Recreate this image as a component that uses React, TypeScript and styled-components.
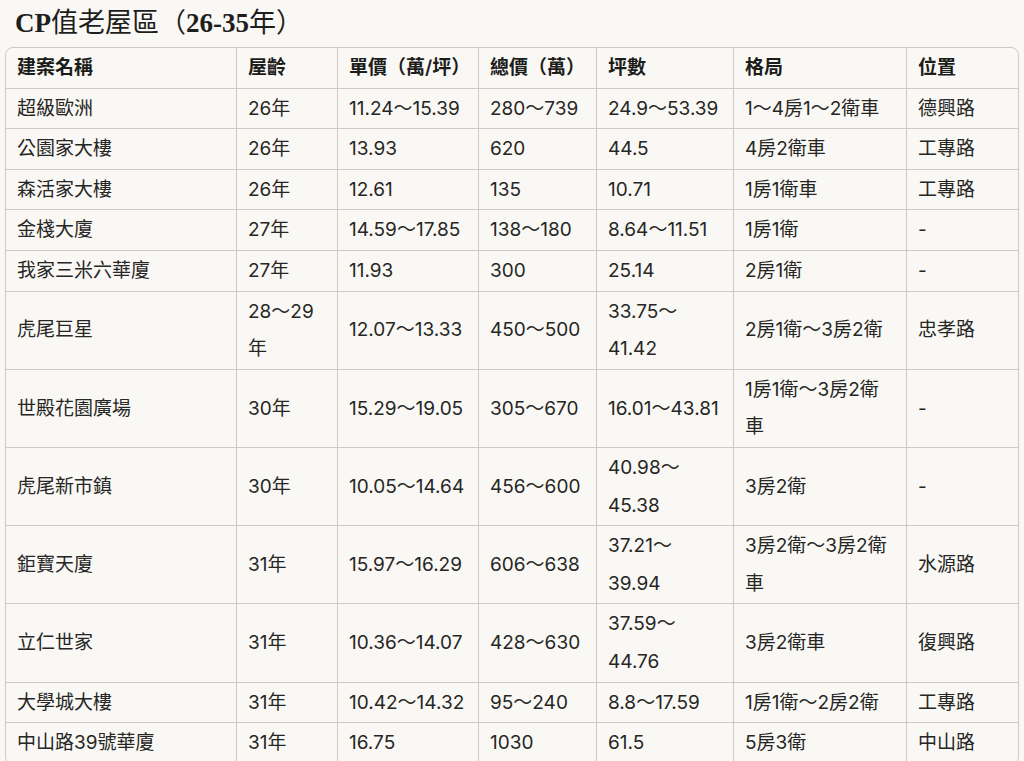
import styled, { createGlobalStyle } from "styled-components"

const GlobalStyle = createGlobalStyle`
  html, body {
    margin: 0;
    padding: 0;
    background: #f9f8f5;
  }
  body {
    font-family: Inter, "Noto Sans CJK TC", sans-serif;
    color: #262624;
  }
`

const Page = styled.div`
  padding: 0 5px;
`

const Title = styled.h2`
  margin: 0;
  padding: 0 0 0 10px;
  height: 47px;
  line-height: 47px;
  font-family: "Liberation Serif", "Noto Sans CJK TC", serif;
  font-size: 27px;
  font-weight: 700;
  color: #1e1e1c;
`

const Light = styled.span`
  font-weight: 400;
`

const Frame = styled.div`
  border: 1px solid #cdcac4;
  border-radius: 8px;
  overflow: hidden;
`

const Table = styled.table`
  width: 100%;
  table-layout: fixed;
  border-collapse: separate;
  border-spacing: 0;
  font-size: 19px;
`

const Cell = styled.td`
  padding: 1px 11px;
  line-height: 37.6px;
  text-align: left;
  vertical-align: middle;
  border-right: 1px solid #cdcac4;
  border-bottom: 1px solid #cdcac4;
  &:last-child {
    border-right: none;
  }
`

const Head = styled(Cell).attrs({ as: "th" })`
  font-weight: 600;
  color: #1c1c1a;
`

const widths = [231, 101, 141, 118, 137, 173, 112]
const headers = ["建案名稱", "屋齡", "單價（萬/坪）", "總價（萬）", "坪數", "格局", "位置"]

const rows: string[][] = [
  ["超級歐洲", "26年", "11.24～15.39", "280～739", "24.9～53.39", "1～4房1～2衛車", "德興路"],
  ["公園家大樓", "26年", "13.93", "620", "44.5", "4房2衛車", "工專路"],
  ["森活家大樓", "26年", "12.61", "135", "10.71", "1房1衛車", "工專路"],
  ["金棧大廈", "27年", "14.59～17.85", "138～180", "8.64～11.51", "1房1衛", "-"],
  ["我家三米六華廈", "27年", "11.93", "300", "25.14", "2房1衛", "-"],
  ["虎尾巨星", "28～29年", "12.07～13.33", "450～500", "33.75～41.42", "2房1衛～3房2衛", "忠孝路"],
  ["世殿花園廣場", "30年", "15.29～19.05", "305～670", "16.01～43.81", "1房1衛～3房2衛車", "-"],
  ["虎尾新市鎮", "30年", "10.05～14.64", "456～600", "40.98～45.38", "3房2衛", "-"],
  ["鉅寶天廈", "31年", "15.97～16.29", "606～638", "37.21～39.94", "3房2衛～3房2衛車", "水源路"],
  ["立仁世家", "31年", "10.36～14.07", "428～630", "37.59～44.76", "3房2衛車", "復興路"],
  ["大學城大樓", "31年", "10.42～14.32", "95～240", "8.8～17.59", "1房1衛～2房2衛", "工專路"],
  ["中山路39號華廈", "31年", "16.75", "1030", "61.5", "5房3衛", "中山路"],
]

function App() {
  return (
    <Page>
      <GlobalStyle />
      <Title>
        CP<Light>值老屋區（</Light>26-35<Light>年）</Light>
      </Title>
      <Frame>
        <Table>
          <colgroup>
            {widths.map((w, i) => (
              <col key={i} style={{ width: w }} />
            ))}
          </colgroup>
          <thead>
            <tr>
              {headers.map((h) => (
                <Head key={h}>{h}</Head>
              ))}
            </tr>
          </thead>
          <tbody>
            {rows.map((r) => (
              <tr key={r[0]}>
                {r.map((c, i) => (
                  <Cell key={i}>{c}</Cell>
                ))}
              </tr>
            ))}
          </tbody>
        </Table>
      </Frame>
    </Page>
  )
}

export default App
